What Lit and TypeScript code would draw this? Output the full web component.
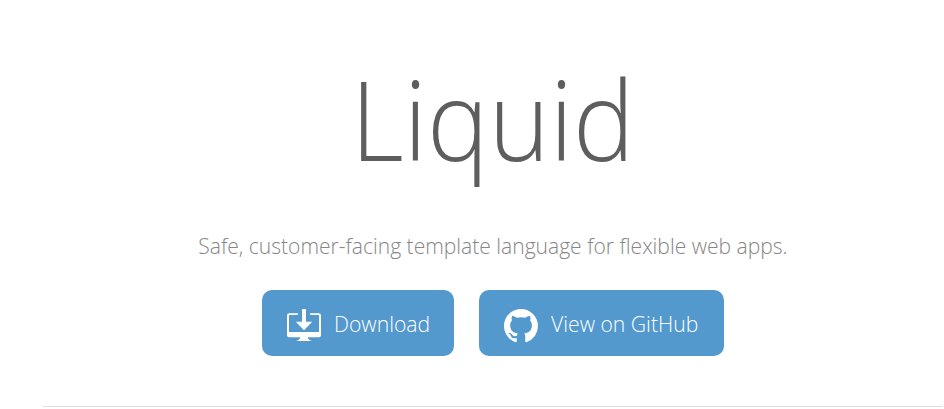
import { LitElement, html, css, svg } from "lit";
import { customElement } from "lit/decorators.js";

const downloadIcon = html`<svg class="icon" width="34" height="34" viewBox="0 0 34 34" aria-hidden="true">
  ${svg`<path d="M11 4.2H2.2Q0 4.2 0 6.4V26.2Q0 28.3 2.2 28.3H13.2Q13 30.8 9.2 32.1H24.8Q21 30.8 20.8 28.3H31.8Q34 28.3 34 26.2V6.4Q34 4.2 31.8 4.2H23V6.1H32V23H2V6.1H11Z"/>
  <path d="M15 0H19V12.8H25.2L17 21.2L8.8 12.8H15Z"/>`}
</svg>`;

const githubIcon = html`<svg class="icon" width="34" height="34" viewBox="0 0 16 16" aria-hidden="true">
  ${svg`<path d="M8 0C3.58 0 0 3.58 0 8c0 3.54 2.29 6.53 5.47 7.59.4.07.55-.17.55-.38 0-.19-.01-.82-.01-1.49-2.01.37-2.53-.49-2.69-.94-.09-.23-.48-.94-.82-1.13-.28-.15-.68-.52-.01-.53.63-.01 1.08.58 1.23.82.72 1.21 1.87.87 2.33.66.07-.52.28-.87.51-1.07-1.78-.2-3.64-.89-3.64-3.95 0-.87.31-1.59.82-2.15-.08-.2-.36-1.02.08-2.12 0 0 .67-.21 2.2.82.64-.18 1.32-.27 2-.27s1.36.09 2 .27c1.53-1.04 2.2-.82 2.2-.82.44 1.1.16 1.92.08 2.12.51.56.82 1.27.82 2.15 0 3.07-1.87 3.75-3.65 3.95.29.25.54.73.54 1.48 0 1.07-.01 1.93-.01 2.2 0 .21.15.46.55.38A8.01 8.01 0 0 0 16 8c0-4.42-3.58-8-8-8z"/>`}
</svg>`;

@customElement("app-root")
export class AppRoot extends LitElement {
  static styles = css`
    :host {
      display: block;
      height: 409px;
      overflow: hidden;
      background: #fff;
      font-family: "Open Sans", "Noto Sans", sans-serif;
      font-weight: 300;
    }
    .intro {
      box-sizing: border-box;
      width: 900px;
      height: 407px;
      margin-left: 43px;
      padding-top: 43px;
      border-bottom: 1px solid #ddd;
      display: flex;
      flex-direction: column;
      align-items: center;
    }
    h1 {
      margin: 0;
      height: 150px;
      line-height: 150px;
      font-size: 110.5px;
      font-weight: 300;
      color: #5e5e5e;
      white-space: nowrap;
      transform: scaleX(0.935);
    }
    p {
      margin: 37px 0 0;
      height: 30px;
      line-height: 30px;
      font-size: 22px;
      color: #868686;
      white-space: nowrap;
      transform: scaleX(0.957);
    }
    .actions {
      display: flex;
      gap: 25px;
      margin-top: 30px;
    }
    .button {
      box-sizing: border-box;
      display: flex;
      align-items: center;
      height: 66px;
      padding: 6px 0 0 25px;
      gap: 12.5px;
      border-radius: 10px;
      background: #5399cd;
      color: #fff;
      font-size: 22px;
      text-decoration: none;
      white-space: nowrap;
    }
    .download {
      width: 192px;
    }
    .github {
      width: 245px;
    }
    .icon {
      flex: none;
      fill: #fff;
    }
    .label {
      line-height: 30px;
      margin-bottom: 7px;
      transform: scaleX(0.962);
      transform-origin: left;
    }
  `;

  render() {
    return html`
      <section class="intro">
        <h1>Liquid</h1>
        <p>Safe, customer-facing template language for flexible web apps.</p>
        <div class="actions">
          <a class="button download" href="#">${downloadIcon}<span class="label">Download</span></a>
          <a class="button github" href="#">${githubIcon}<span class="label">View on GitHub</span></a>
        </div>
      </section>
    `;
  }
}
